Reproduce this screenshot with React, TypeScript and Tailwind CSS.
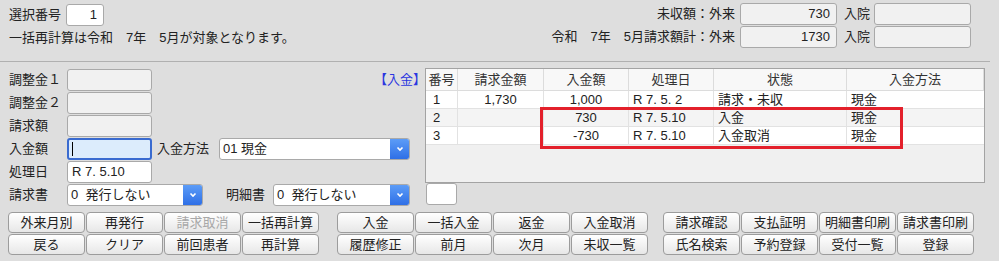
import React from "react";

const font = { fontFamily: "'Liberation Sans', 'Noto Sans CJK JP', sans-serif" };

function Field({ w, value, white, className = "" }: { w: string; value?: string; white?: boolean; className?: string }) {
  return (
    <div
      className={`${w} h-[22px] border border-[#a9a9a9] rounded-[3px] flex items-center justify-end pr-[6px] ${
        white ? "bg-white" : "bg-[#f1f1f1]"
      } ${className}`}
    >
      {value}
    </div>
  );
}

function Select({ w, value }: { w: string; value: string }) {
  return (
    <div className={`${w} h-[22px] flex border border-[#a9a9a9] rounded-[3px] bg-white overflow-hidden`}>
      <div className="flex-1 flex items-center pl-[3px] whitespace-pre">{value}</div>
      <div className="w-[19px] bg-linear-to-b from-[#5c9cf7] to-[#2f6fe6] flex items-center justify-center">
        <svg width="8" height="6" viewBox="0 0 8 6">
          <path d="M1.5 1.5 L4 4 L6.5 1.5" fill="none" stroke="white" strokeWidth="1.6" />
        </svg>
      </div>
    </div>
  );
}

function Btn({ label, disabled }: { label: string; disabled?: boolean }) {
  return (
    <div
      className={`h-[21px] border border-[#9c9c9c] rounded-[4px] bg-linear-to-b from-white to-[#e7e7e7] flex items-center justify-center ${
        disabled ? "text-[#a8a8a8]" : "text-[#222]"
      }`}
    >
      {label}
    </div>
  );
}

const rows = [
  { no: "1", bill: "1,730", paid: "1,000", date: "R 7. 5. 2", state: "請求・未収", method: "現金", bg: "bg-white" },
  { no: "2", bill: "", paid: "730", date: "R 7. 5.10", state: "入金", method: "現金", bg: "bg-[#f4f4f4]" },
  { no: "3", bill: "", paid: "-730", date: "R 7. 5.10", state: "入金取消", method: "現金", bg: "bg-white" },
];

const groups = [
  ["外来月別", "再発行", "請求取消", "一括再計算", "戻る", "クリア", "前回患者", "再計算"],
  ["入金", "一括入金", "返金", "入金取消", "履歴修正", "前月", "次月", "未収一覧"],
  ["請求確認", "支払証明", "明細書印刷", "請求書印刷", "氏名検索", "予約登録", "受付一覧", "登録"],
];

export default function App() {
  return (
    <div className="w-[999px] h-[261px] bg-[#dedede] text-[13px] text-[#222] overflow-hidden" style={font}>
      {/* header */}
      <div className="w-[990px] h-[62px] border-b border-[#b0b0b0] flex pt-[3px] pr-[19px]">
        <div className="pl-[9px]">
          <div className="flex items-center h-[23px]">
            <span className="w-[57px]">選択番号</span>
            <Field w="w-[38px]" value="1" white />
          </div>
          <div className="mt-[2px] whitespace-pre">一括再計算は令和　7年　5月が対象となります。</div>
        </div>
        <div className="ml-auto flex flex-col gap-px">
          <div className="flex items-center">
            <span className="w-[200px] text-right pr-[5px]">未収額：外来</span>
            <Field w="w-[97px]" value="730" />
            <span className="ml-[7px] w-[30px]">入院</span>
            <Field w="w-[97px]" />
          </div>
          <div className="flex items-center">
            <span className="w-[200px] text-right pr-[5px] whitespace-pre">令和　7年　5月請求額計：外来</span>
            <Field w="w-[97px]" value="1730" />
            <span className="ml-[7px] w-[30px]">入院</span>
            <Field w="w-[97px]" />
          </div>
        </div>
      </div>

      {/* middle */}
      <div className="flex pt-[6px]">
        <div className="w-[425px] pl-[9px] flex flex-col">
          <div className="flex items-center h-[23px]">
            <span className="w-[58px]">調整金１</span>
            <Field w="w-[85px]" />
            <span className="ml-auto -mr-px text-[#2b36e0]">【入金】</span>
          </div>
          <div className="flex items-center h-[23px]">
            <span className="w-[58px]">調整金２</span>
            <Field w="w-[85px]" />
          </div>
          <div className="flex items-center h-[23px]">
            <span className="w-[58px]">請求額</span>
            <Field w="w-[85px]" />
          </div>
          <div className="flex items-center h-[23px]">
            <span className="w-[58px]">入金額</span>
            <div className="w-[85px] h-[22px] border-2 border-[#3a6bd0] rounded-[3px] bg-[#dcecfc] flex items-center pl-[3px]">
              <div className="w-px h-[14px] bg-black" />
            </div>
            <span className="ml-[5px] w-[62px]">入金方法</span>
            <Select w="w-[191px]" value="01 現金" />
          </div>
          <div className="flex items-center h-[23px]">
            <span className="w-[58px]">処理日</span>
            <div className="w-[85px] h-[22px] border border-[#a9a9a9] rounded-[3px] bg-white flex items-center pl-[4px]">
              R 7. 5.10
            </div>
          </div>
          <div className="flex items-center h-[23px]">
            <span className="w-[58px]">請求書</span>
            <Select w="w-[136px]" value="0  発行しない" />
            <span className="ml-[23px] w-[47px]">明細書</span>
            <Select w="w-[137px]" value="0  発行しない" />
          </div>
        </div>

        <div className="flex flex-col">
          <div className="relative w-[560px] h-[115px] border border-[#a3a3a3] bg-[#f0f0f0]">
            <div className="grid grid-cols-[32px_86px_85px_85px_133px_1fr]">
              {["番号", "請求金額", "入金額", "処理日", "状態", "入金方法"].map((h) => (
                <div
                  key={h}
                  className="h-[22px] bg-[#f8f8f8] border-r border-b border-[#dcdcdc] last:border-r-0 flex items-center justify-center text-[#333]"
                >
                  {h}
                </div>
              ))}
              {rows.map((r) => (
                <React.Fragment key={r.no}>
                  <div className={`${r.bg} h-[18px] border-r border-b border-[#e2e2e2] flex items-center pl-[7px]`}>{r.no}</div>
                  <div className={`${r.bg} h-[18px] border-r border-b border-[#e2e2e2] flex items-center justify-center`}>{r.bill}</div>
                  <div className={`${r.bg} h-[18px] border-r border-b border-[#e2e2e2] flex items-center justify-center`}>{r.paid}</div>
                  <div className={`${r.bg} h-[18px] border-r border-b border-[#e2e2e2] flex items-center pl-[4px]`}>{r.date}</div>
                  <div className={`${r.bg} h-[18px] border-r border-b border-[#e2e2e2] flex items-center pl-[4px]`}>{r.state}</div>
                  <div className={`${r.bg} h-[18px] border-b border-[#e2e2e2] flex items-center pl-[4px]`}>{r.method}</div>
                </React.Fragment>
              ))}
            </div>
            <div className="absolute left-[114px] top-[38px] w-[363px] h-[42px] border-[3px] border-[#e3202b]" />
          </div>
          <div className="ml-px w-[31px] h-[22px] border border-[#a9a9a9] rounded-[3px] bg-white" />
        </div>
      </div>

      {/* buttons */}
      <div className="flex mt-[6px] pl-[8px]">
        {groups.map((g, i) => (
          <div
            key={i}
            className={`grid grid-cols-[repeat(4,77px)] gap-px ${i === 1 ? "ml-[18px]" : i === 2 ? "ml-[15px]" : ""}`}
          >
            {g.map((b) => (
              <Btn key={b} label={b} disabled={b === "請求取消"} />
            ))}
          </div>
        ))}
      </div>
    </div>
  );
}
